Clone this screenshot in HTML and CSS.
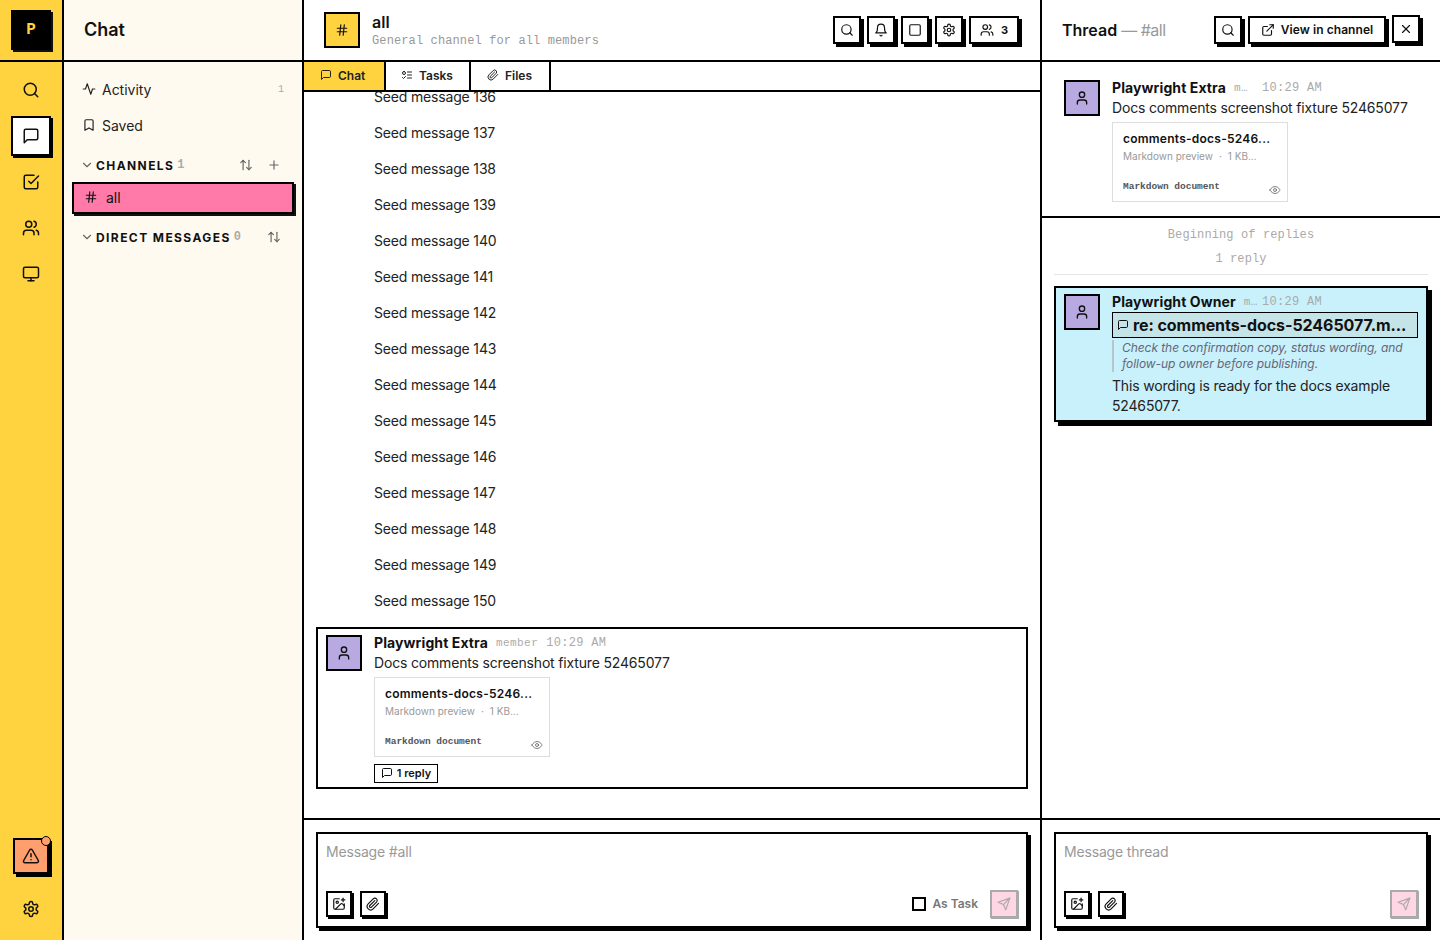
FILE: index.html
```html
<!DOCTYPE html>
<html lang="en">
<head>
    <meta charset="UTF-8">
    <meta name="viewport" content="width=device-width, initial-scale=1.0">
    <title>Chat</title>
    <link rel="stylesheet" href="styles.css">
</head>
<body>
    <svg class="sprite" xmlns="http://www.w3.org/2000/svg">
        <symbol id="i-search" viewBox="0 0 24 24"><circle cx="11" cy="11" r="8"/><path d="m21 21-4.3-4.3"/></symbol>
        <symbol id="i-chat" viewBox="0 0 24 24"><path d="M21 15a2 2 0 0 1-2 2H7l-4 4V5a2 2 0 0 1 2-2h14a2 2 0 0 1 2 2z"/></symbol>
        <symbol id="i-check" viewBox="0 0 24 24"><path d="m9 11 3 3L22 4"/><path d="M21 12v7a2 2 0 0 1-2 2H5a2 2 0 0 1-2-2V5a2 2 0 0 1 2-2h11"/></symbol>
        <symbol id="i-users" viewBox="0 0 24 24"><path d="M16 21v-2a4 4 0 0 0-4-4H6a4 4 0 0 0-4 4v2"/><circle cx="9" cy="7" r="4"/><path d="M22 21v-2a4 4 0 0 0-3-3.87"/><path d="M16 3.13a4 4 0 0 1 0 7.75"/></symbol>
        <symbol id="i-monitor" viewBox="0 0 24 24"><rect x="2" y="3" width="20" height="14" rx="2"/><path d="M8 21h8"/><path d="M12 17v4"/></symbol>
        <symbol id="i-alert" viewBox="0 0 24 24"><path d="m21.73 18-8-14a2 2 0 0 0-3.48 0l-8 14A2 2 0 0 0 4 21h16a2 2 0 0 0 1.73-3"/><path d="M12 9v4"/><path d="M12 17h.01"/></symbol>
        <symbol id="i-gear" viewBox="0 0 24 24"><path d="M12.22 2h-.44a2 2 0 0 0-2 2v.18a2 2 0 0 1-1 1.73l-.43.25a2 2 0 0 1-2 0l-.15-.08a2 2 0 0 0-2.73.73l-.22.38a2 2 0 0 0 .73 2.73l.15.1a2 2 0 0 1 1 1.72v.51a2 2 0 0 1-1 1.74l-.15.09a2 2 0 0 0-.73 2.73l.22.38a2 2 0 0 0 2.73.73l.15-.08a2 2 0 0 1 2 0l.43.25a2 2 0 0 1 1 1.73V20a2 2 0 0 0 2 2h.44a2 2 0 0 0 2-2v-.18a2 2 0 0 1 1-1.73l.43-.25a2 2 0 0 1 2 0l.15.08a2 2 0 0 0 2.73-.73l.22-.39a2 2 0 0 0-.73-2.73l-.15-.08a2 2 0 0 1-1-1.74v-.5a2 2 0 0 1 1-1.74l.15-.09a2 2 0 0 0 .73-2.73l-.22-.38a2 2 0 0 0-2.73-.73l-.15.08a2 2 0 0 1-2 0l-.43-.25a2 2 0 0 1-1-1.73V4a2 2 0 0 0-2-2z"/><circle cx="12" cy="12" r="3"/></symbol>
        <symbol id="i-activity" viewBox="0 0 24 24"><path d="M22 12h-4l-3 9L9 3l-3 9H2"/></symbol>
        <symbol id="i-bookmark" viewBox="0 0 24 24"><path d="m19 21-7-4-7 4V5a2 2 0 0 1 2-2h10a2 2 0 0 1 2 2z"/></symbol>
        <symbol id="i-chevron" viewBox="0 0 24 24"><path d="m6 9 6 6 6-6"/></symbol>
        <symbol id="i-sort" viewBox="0 0 24 24"><path d="m21 16-4 4-4-4"/><path d="M17 20V4"/><path d="m3 8 4-4 4 4"/><path d="M7 4v16"/></symbol>
        <symbol id="i-plus" viewBox="0 0 24 24"><path d="M5 12h14"/><path d="M12 5v14"/></symbol>
        <symbol id="i-hash" viewBox="0 0 24 24"><path d="M4 9h16"/><path d="M4 15h16"/><path d="M10 3 8 21"/><path d="M16 3l-2 18"/></symbol>
        <symbol id="i-tasks" viewBox="0 0 24 24"><rect x="3" y="5" width="6" height="6" rx="3"/><path d="m3 17 2 2 4-4"/><path d="M13 6h8"/><path d="M13 12h8"/><path d="M13 18h8"/></symbol>
        <symbol id="i-clip" viewBox="0 0 24 24"><path d="m21.44 11.05-9.19 9.19a6 6 0 0 1-8.49-8.49l8.57-8.57A4 4 0 1 1 18 8.84l-8.59 8.57a2 2 0 0 1-2.83-2.83l8.49-8.48"/></symbol>
        <symbol id="i-bell" viewBox="0 0 24 24"><path d="M6 8a6 6 0 0 1 12 0c0 7 3 9 3 9H3s3-2 3-9"/><path d="M10.3 21a1.94 1.94 0 0 0 3.4 0"/></symbol>
        <symbol id="i-square" viewBox="0 0 24 24"><rect x="3" y="3" width="18" height="18" rx="2"/></symbol>
        <symbol id="i-user" viewBox="0 0 24 24"><path d="M19 21v-2a4 4 0 0 0-4-4H9a4 4 0 0 0-4 4v2"/><circle cx="12" cy="7" r="4"/></symbol>
        <symbol id="i-external" viewBox="0 0 24 24"><path d="M15 3h6v6"/><path d="M10 14 21 3"/><path d="M18 13v6a2 2 0 0 1-2 2H5a2 2 0 0 1-2-2V8a2 2 0 0 1 2-2h6"/></symbol>
        <symbol id="i-x" viewBox="0 0 24 24"><path d="M18 6 6 18"/><path d="m6 6 12 12"/></symbol>
        <symbol id="i-eye" viewBox="0 0 24 24"><path d="M2 12s3-7 10-7 10 7 10 7-3 7-10 7-10-7-10-7z"/><circle cx="12" cy="12" r="3"/></symbol>
        <symbol id="i-image" viewBox="0 0 24 24"><path d="M16 5h6"/><path d="M19 2v6"/><path d="M21 11.5V19a2 2 0 0 1-2 2H5a2 2 0 0 1-2-2V5a2 2 0 0 1 2-2h7.5"/><path d="m21 15-3.086-3.086a2 2 0 0 0-2.828 0L6 21"/><circle cx="9" cy="9" r="2"/></symbol>
        <symbol id="i-send" viewBox="0 0 24 24"><path d="m22 2-7 20-4-9-9-4z"/><path d="M22 2 11 13"/></symbol>
    </svg>

    <div class="app">
        <!-- left rail -->
        <nav class="rail">
            <div class="rail-top"><div class="logo">P</div></div>
            <div class="rail-nav">
                <div class="rail-btn"><svg class="icon i18"><use href="#i-search"/></svg></div>
                <div class="rail-btn active"><svg class="icon i18"><use href="#i-chat"/></svg></div>
                <div class="rail-btn"><svg class="icon i18"><use href="#i-check"/></svg></div>
                <div class="rail-btn"><svg class="icon i18"><use href="#i-users"/></svg></div>
                <div class="rail-btn"><svg class="icon i18"><use href="#i-monitor"/></svg></div>
            </div>
            <div class="rail-bottom">
                <div class="alert-btn">
                    <svg class="icon i18"><use href="#i-alert"/></svg>
                    <span class="alert-dot"></span>
                </div>
                <div class="rail-btn"><svg class="icon i18"><use href="#i-gear"/></svg></div>
            </div>
        </nav>

        <!-- channel list -->
        <aside class="sidebar">
            <div class="sidebar-head">Chat</div>
            <div class="sidebar-body">
                <div class="side-link">
                    <svg class="icon i14"><use href="#i-activity"/></svg>
                    <span>Activity</span>
                    <span class="side-count">1</span>
                </div>
                <div class="side-link">
                    <svg class="icon i14"><use href="#i-bookmark"/></svg>
                    <span>Saved</span>
                </div>
                <div class="section-head first">
                    <svg class="icon i14 muted"><use href="#i-chevron"/></svg>
                    <span class="section-name">CHANNELS</span>
                    <span class="section-count">1</span>
                    <svg class="icon i14 muted push"><use href="#i-sort"/></svg>
                    <svg class="icon i14 muted"><use href="#i-plus"/></svg>
                </div>
                <div class="channel">
                    <svg class="icon i14"><use href="#i-hash"/></svg>
                    <span>all</span>
                </div>
                <div class="section-head">
                    <svg class="icon i14 muted"><use href="#i-chevron"/></svg>
                    <span class="section-name">DIRECT MESSAGES</span>
                    <span class="section-count">0</span>
                    <svg class="icon i14 muted push"><use href="#i-sort"/></svg>
                </div>
            </div>
        </aside>

        <!-- channel -->
        <main class="main">
            <header class="main-head">
                <div class="channel-badge"><svg class="icon i14"><use href="#i-hash"/></svg></div>
                <div class="channel-info">
                    <div class="channel-title">all</div>
                    <div class="channel-desc">General channel for all members</div>
                </div>
                <div class="head-actions">
                    <div class="icon-btn"><svg class="icon i14"><use href="#i-search"/></svg></div>
                    <div class="icon-btn"><svg class="icon i14"><use href="#i-bell"/></svg></div>
                    <div class="icon-btn"><svg class="icon i14"><use href="#i-square"/></svg></div>
                    <div class="icon-btn"><svg class="icon i14"><use href="#i-gear"/></svg></div>
                    <div class="icon-btn members"><svg class="icon i14"><use href="#i-users"/></svg><span>3</span></div>
                </div>
            </header>
            <div class="tabs">
                <div class="tab active"><svg class="icon i12"><use href="#i-chat"/></svg>Chat</div>
                <div class="tab"><svg class="icon i12"><use href="#i-tasks"/></svg>Tasks</div>
                <div class="tab"><svg class="icon i12"><use href="#i-clip"/></svg>Files</div>
            </div>
            <div class="messages">
                <div class="seed">Seed message 136</div>
                <div class="seed">Seed message 137</div>
                <div class="seed">Seed message 138</div>
                <div class="seed">Seed message 139</div>
                <div class="seed">Seed message 140</div>
                <div class="seed">Seed message 141</div>
                <div class="seed">Seed message 142</div>
                <div class="seed">Seed message 143</div>
                <div class="seed">Seed message 144</div>
                <div class="seed">Seed message 145</div>
                <div class="seed">Seed message 146</div>
                <div class="seed">Seed message 147</div>
                <div class="seed">Seed message 148</div>
                <div class="seed">Seed message 149</div>
                <div class="seed">Seed message 150</div>
                <div class="message-box">
                    <div class="avatar"><svg class="icon i16"><use href="#i-user"/></svg></div>
                    <div class="message-body">
                        <div class="meta">
                            <span class="author">Playwright Extra</span>
                            <span class="role">member</span>
                            <span class="time">10:29 AM</span>
                        </div>
                        <div class="text">Docs comments screenshot fixture 52465077</div>
                        <div class="file-card">
                            <div class="file-name">comments-docs-5246...</div>
                            <div class="file-sub"><span>Markdown preview</span><span>·</span><span>1 KB...</span></div>
                            <div class="file-foot">
                                <span class="file-type">Markdown document</span>
                                <svg class="icon i12 eye"><use href="#i-eye"/></svg>
                            </div>
                        </div>
                        <div class="reply-btn"><svg class="icon i12"><use href="#i-chat"/></svg>1 reply</div>
                    </div>
                </div>
            </div>
            <div class="composer-wrap">
                <div class="composer">
                    <div class="placeholder">Message #all</div>
                    <div class="composer-foot">
                        <div class="tool-btn"><svg class="icon i14"><use href="#i-image"/></svg></div>
                        <div class="tool-btn"><svg class="icon i14"><use href="#i-clip"/></svg></div>
                        <label class="as-task"><span class="checkbox"></span>As Task</label>
                        <div class="send-btn"><svg class="icon i14"><use href="#i-send"/></svg></div>
                    </div>
                </div>
            </div>
        </main>

        <!-- thread -->
        <section class="thread">
            <header class="thread-head">
                <div class="thread-title">Thread <span class="thread-sub">— #all</span></div>
                <div class="thread-actions">
                    <div class="icon-btn"><svg class="icon i14"><use href="#i-search"/></svg></div>
                    <div class="icon-btn view-btn"><svg class="icon i14"><use href="#i-external"/></svg>View in channel</div>
                    <div class="icon-btn close-btn"><svg class="icon i14"><use href="#i-x"/></svg></div>
                </div>
            </header>
            <div class="thread-root">
                <div class="avatar"><svg class="icon i16"><use href="#i-user"/></svg></div>
                <div class="message-body">
                    <div class="meta">
                        <span class="author">Playwright Extra</span>
                        <span class="role">m…</span>
                        <span class="time">10:29 AM</span>
                    </div>
                    <div class="text">Docs comments screenshot fixture 52465077</div>
                    <div class="file-card">
                        <div class="file-name">comments-docs-5246...</div>
                        <div class="file-sub"><span>Markdown preview</span><span>·</span><span>1 KB...</span></div>
                        <div class="file-foot">
                            <span class="file-type">Markdown document</span>
                            <svg class="icon i12 eye"><use href="#i-eye"/></svg>
                        </div>
                    </div>
                </div>
            </div>
            <div class="replies">
                <div class="replies-note">Beginning of replies</div>
                <div class="replies-count">1 reply</div>
                <div class="reply-card">
                    <div class="avatar"><svg class="icon i16"><use href="#i-user"/></svg></div>
                    <div class="message-body">
                        <div class="meta">
                            <span class="author">Playwright Owner</span>
                            <span class="role">m…</span>
                            <span class="time">10:29 AM</span>
                        </div>
                        <div class="quote-title"><svg class="icon i12"><use href="#i-chat"/></svg>re: comments-docs-52465077.m...</div>
                        <div class="quote-text">Check the confirmation copy, status wording, and follow-up owner before publishing.</div>
                        <div class="reply-text">This wording is ready for the docs example 52465077.</div>
                    </div>
                </div>
            </div>
            <div class="composer-wrap">
                <div class="composer">
                    <div class="placeholder">Message thread</div>
                    <div class="composer-foot">
                        <div class="tool-btn"><svg class="icon i14"><use href="#i-image"/></svg></div>
                        <div class="tool-btn"><svg class="icon i14"><use href="#i-clip"/></svg></div>
                        <div class="send-btn push"><svg class="icon i14"><use href="#i-send"/></svg></div>
                    </div>
                </div>
            </div>
        </section>
    </div>
</body>
</html>
```

FILE: styles.css
```css
* {
    margin: 0;
    padding: 0;
    box-sizing: border-box;
}

body {
    font-family: 'Inter', 'Liberation Sans', sans-serif;
    font-size: 14px;
    letter-spacing: -0.17px;
    color: #111;
    background: #fff;
    height: 940px;
    overflow: hidden;
}

.sprite {
    display: none;
}

.icon {
    fill: none;
    stroke: currentColor;
    stroke-width: 2;
    stroke-linecap: round;
    stroke-linejoin: round;
    flex-shrink: 0;
}

.i12 { width: 12px; height: 12px; }
.i14 { width: 14px; height: 14px; }
.i16 { width: 16px; height: 16px; }
.i18 { width: 18px; height: 18px; }

.muted {
    color: #666;
}

.push {
    margin-left: auto;
}

.app {
    display: grid;
    grid-template-columns: 64px 240px 738px 398px;
    height: 940px;
}

/* rail */
.rail {
    background: #ffd23f;
    border-right: 2px solid #000;
    display: flex;
    flex-direction: column;
}

.rail-top {
    height: 62px;
    border-bottom: 2px solid #000;
    padding: 10px 11px;
}

.logo {
    width: 40px;
    height: 40px;
    background: #000;
    box-shadow: 2px 2px 0 #111;
    color: #ffd23f;
    font-family: 'Liberation Mono', monospace;
    font-weight: 700;
    font-size: 16px;
    letter-spacing: 0;
    display: flex;
    align-items: center;
    justify-content: center;
}

.rail-nav {
    padding: 8px 11px 0;
    display: flex;
    flex-direction: column;
    gap: 6px;
}

.rail-btn {
    width: 40px;
    height: 40px;
    display: flex;
    align-items: center;
    justify-content: center;
}

.rail-btn.active {
    background: #fff;
    border: 2px solid #000;
    box-shadow: 2px 2px 0 #000;
}

.rail-bottom {
    margin-top: auto;
    padding: 0 11px 11px;
    display: flex;
    flex-direction: column;
    align-items: center;
    gap: 15px;
}

.alert-btn {
    position: relative;
    width: 36px;
    height: 36px;
    background: #ff9f6e;
    border: 2px solid #000;
    box-shadow: 3px 3px 0 #000;
    display: flex;
    align-items: center;
    justify-content: center;
}

.alert-dot {
    position: absolute;
    top: -4px;
    right: -4px;
    width: 10px;
    height: 10px;
    border-radius: 50%;
    background: #ff9f6e;
    border: 1px solid #000;
}

/* sidebar */
.sidebar {
    background: #fffaf0;
    border-right: 2px solid #000;
}

.sidebar-head {
    height: 62px;
    border-bottom: 2px solid #000;
    padding: 0 20px 2px;
    display: flex;
    align-items: center;
    font-size: 18px;
    font-weight: 600;
    letter-spacing: 0;
}

.sidebar-body {
    padding: 10px 8px 0;
}

.side-link {
    height: 36px;
    padding: 0 10px 2px;
    display: flex;
    align-items: center;
    gap: 6px;
    color: #222;
    letter-spacing: -0.02px;
}

.side-count {
    margin-left: auto;
    font-family: 'Liberation Mono', monospace;
    font-size: 10px;
    color: #aaa;
}

.section-head {
    height: 20px;
    padding: 0 13px 0 8px;
    display: flex;
    align-items: center;
    gap: 14px;
    margin-top: 13px;
}

.section-head.first {
    margin-top: 11px;
    margin-bottom: 7px;
}

.section-head .section-name {
    font-size: 12px;
    font-weight: 700;
    letter-spacing: 1.41px;
    margin-left: -12px;
}

.section-count {
    font-family: 'Liberation Mono', monospace;
    font-size: 12px;
    font-weight: 700;
    letter-spacing: 0;
    color: #aaa;
    margin-left: -11px;
}

.channel {
    height: 32px;
    background: #ff7aa8;
    border: 2px solid #000;
    box-shadow: 2px 2px 0 #111;
    padding: 0 10px 2px;
    display: flex;
    align-items: center;
    gap: 8px;
    letter-spacing: 0;
}

/* channel header */
.main {
    border-right: 2px solid #000;
    display: flex;
    flex-direction: column;
    height: 940px;
}

.main-head {
    height: 62px;
    border-bottom: 2px solid #000;
    padding: 0 21px 0 20px;
    display: flex;
    align-items: center;
    gap: 12px;
    flex-shrink: 0;
}

.channel-badge {
    width: 36px;
    height: 36px;
    background: #ffd23f;
    border: 2px solid #000;
    display: flex;
    align-items: center;
    justify-content: center;
}

.channel-title {
    font-size: 16px;
    font-weight: 600;
    line-height: 20px;
    letter-spacing: 0;
}

.channel-desc,
.role,
.time,
.replies-note,
.replies-count {
    font-family: 'Liberation Mono', monospace;
    letter-spacing: 0.12px;
}

.channel-desc {
    margin-top: 1px;
    font-size: 12px;
    color: #999;
    line-height: 16px;
}

.head-actions,
.thread-actions {
    margin-left: auto;
    display: flex;
    gap: 6px;
    align-items: center;
}

.icon-btn {
    height: 28px;
    min-width: 28px;
    background: #fff;
    border: 2px solid #000;
    box-shadow: 3px 3px 0 #000;
    display: flex;
    align-items: center;
    justify-content: center;
}

.members {
    width: 50px;
    gap: 7px;
    font-size: 11px;
    font-weight: 700;
}

/* tabs */
.tabs {
    height: 30px;
    border-bottom: 2px solid #000;
    display: flex;
    flex-shrink: 0;
}

.tab {
    width: 85px;
    padding: 0 0 2px 15px;
    border-right: 2px solid #000;
    display: flex;
    align-items: center;
    gap: 6px;
    font-size: 12px;
    font-weight: 600;
    letter-spacing: 0;
    color: #222;
}

.tab.active {
    width: 82px;
    padding-left: 16px;
    background: #ffd23f;
}

.tab:last-child {
    width: 80px;
    padding-left: 16px;
}

/* messages */
.messages {
    flex: 1;
    min-height: 0;
    overflow: hidden;
    display: flex;
    flex-direction: column;
    justify-content: flex-end;
    padding: 0 12px 29px;
}

.seed {
    height: 36px;
    flex-shrink: 0;
    padding: 0 0 2px 58px;
    display: flex;
    align-items: center;
    color: #222;
}

.message-box {
    margin-top: 8px;
    height: 162px;
    flex-shrink: 0;
    border: 2px solid #000;
    padding: 6px 8px;
    display: flex;
    gap: 12px;
}

.avatar {
    width: 36px;
    height: 36px;
    background: #b8a9e0;
    border: 2px solid #000;
    display: flex;
    align-items: center;
    justify-content: center;
    flex-shrink: 0;
}

.message-body {
    flex: 1;
    min-width: 0;
}

.meta {
    display: flex;
    align-items: center;
    gap: 8px;
    height: 16px;
    white-space: nowrap;
}

.author {
    font-size: 14px;
    font-weight: 700;
    line-height: 16px;
    letter-spacing: 0.1px;
}

.role,
.time {
    font-size: 11px;
    line-height: 14px;
    letter-spacing: 0.45px;
    color: #aaa;
}

.time {
    font-size: 12px;
    letter-spacing: 0.3px;
}

/* the thread column is narrow, so the role takes what the name leaves */
.thread .meta {
    width: 210px;
}

.thread .role {
    flex: 1;
    min-width: 0;
}

.text {
    margin-top: 2px;
    line-height: 20px;
    color: #222;
}

.file-card {
    width: 176px;
    height: 80px;
    margin-top: 4px;
    border: 1px solid #ddd;
    background: #fff;
    padding: 7px 10px;
}

.file-name {
    font-size: 12px;
    font-weight: 600;
    line-height: 18px;
    letter-spacing: 0.24px;
}

.file-sub {
    margin-top: 1px;
    font-size: 10px;
    letter-spacing: 0;
    color: #999;
    line-height: 14px;
    display: flex;
    gap: 6px;
}

.file-foot {
    margin-top: 17px;
    display: flex;
    align-items: center;
    justify-content: space-between;
}

.file-type {
    font-family: 'Liberation Mono', monospace;
    font-size: 9.5px;
    font-weight: 700;
    letter-spacing: 0;
    color: #555;
}

.eye {
    color: #555;
    margin: 4px -4px -4px 0;
    stroke-width: 1.5;
}

.reply-btn {
    margin-top: 7px;
    width: 64px;
    height: 19px;
    padding-bottom: 1px;
    border: 1px solid #000;
    display: flex;
    align-items: center;
    justify-content: center;
    gap: 4px;
    font-size: 11px;
    font-weight: 600;
    letter-spacing: 0;
}

/* composer */
.composer-wrap {
    height: 122px;
    flex-shrink: 0;
    border-top: 2px solid #000;
    padding: 12px 12px 0;
}

.composer {
    height: 96px;
    border: 2px solid #000;
    box-shadow: 3px 3px 0 #000;
    background: #fff;
    padding: 8px;
    display: flex;
    flex-direction: column;
}

.placeholder {
    line-height: 20px;
    color: #999;
}

.composer-foot {
    margin-top: auto;
    display: flex;
    align-items: center;
    gap: 8px;
}

.tool-btn {
    width: 26px;
    height: 26px;
    background: #fff;
    border: 2px solid #000;
    box-shadow: 2px 2px 0 #000;
    display: flex;
    align-items: center;
    justify-content: center;
}

.as-task {
    margin-left: auto;
    margin-right: 4px;
    display: flex;
    align-items: center;
    gap: 6px;
    padding-bottom: 1px;
    font-size: 12px;
    font-weight: 600;
    letter-spacing: 0;
    color: #777;
}

.checkbox {
    width: 14px;
    height: 14px;
    border: 2px solid #000;
    background: #fff;
}

.send-btn {
    width: 28px;
    height: 28px;
    background: #ffd6e3;
    border: 2px solid #aaa;
    box-shadow: 1px 1px 0 #aaa;
    color: #aaa;
    display: flex;
    align-items: center;
    justify-content: center;
}

/* thread */
.thread {
    display: flex;
    flex-direction: column;
    height: 940px;
}

.thread-head {
    height: 62px;
    border-bottom: 2px solid #000;
    padding: 0 20px;
    display: flex;
    align-items: center;
    flex-shrink: 0;
}

.thread-title {
    font-size: 16px;
    font-weight: 600;
    letter-spacing: 0;
}

.thread-sub {
    font-weight: 400;
    letter-spacing: -0.5px;
    color: #999;
}

.view-btn {
    width: 138px;
    gap: 6px;
    padding-bottom: 1px;
    font-size: 12px;
    font-weight: 600;
    letter-spacing: 0.07px;
}

.close-btn {
    position: relative;
    top: -1px;
}

.thread-root {
    height: 156px;
    flex-shrink: 0;
    border-bottom: 2px solid #000;
    padding: 18px 12px 0 22px;
    display: flex;
    gap: 12px;
}

.replies {
    flex: 1;
    min-height: 0;
    padding: 0 12px;
}

.replies-note,
.replies-count {
    height: 24px;
    font-size: 12px;
    color: #aaa;
    display: flex;
    align-items: center;
    justify-content: center;
}

.replies-note {
    margin-top: 5px;
}

.replies-count {
    height: 28px;
    padding-bottom: 4px;
    border-bottom: 1px solid #e5e5e5;
}

.reply-card {
    margin-top: 11px;
    height: 136px;
    background: #c8f1fb;
    border: 2px solid #000;
    box-shadow: 4px 4px 0 #000;
    padding: 6px 8px;
    display: flex;
    gap: 12px;
}

.quote-title {
    margin-top: 2px;
    height: 26px;
    background: #c4e4e8;
    border: 1px solid #000;
    padding: 0 4px;
    display: flex;
    align-items: center;
    gap: 4px;
    font-size: 16px;
    font-weight: 700;
    letter-spacing: -0.07px;
    white-space: nowrap;
}

.quote-text {
    margin-top: 2px;
    border-left: 2px solid #b5c7cc;
    padding-left: 8px;
    font-size: 12px;
    font-style: italic;
    letter-spacing: -0.06px;
    line-height: 16px;
    color: #667;
}

.reply-text {
    margin-top: 4px;
    line-height: 20px;
    color: #222;
}
```
